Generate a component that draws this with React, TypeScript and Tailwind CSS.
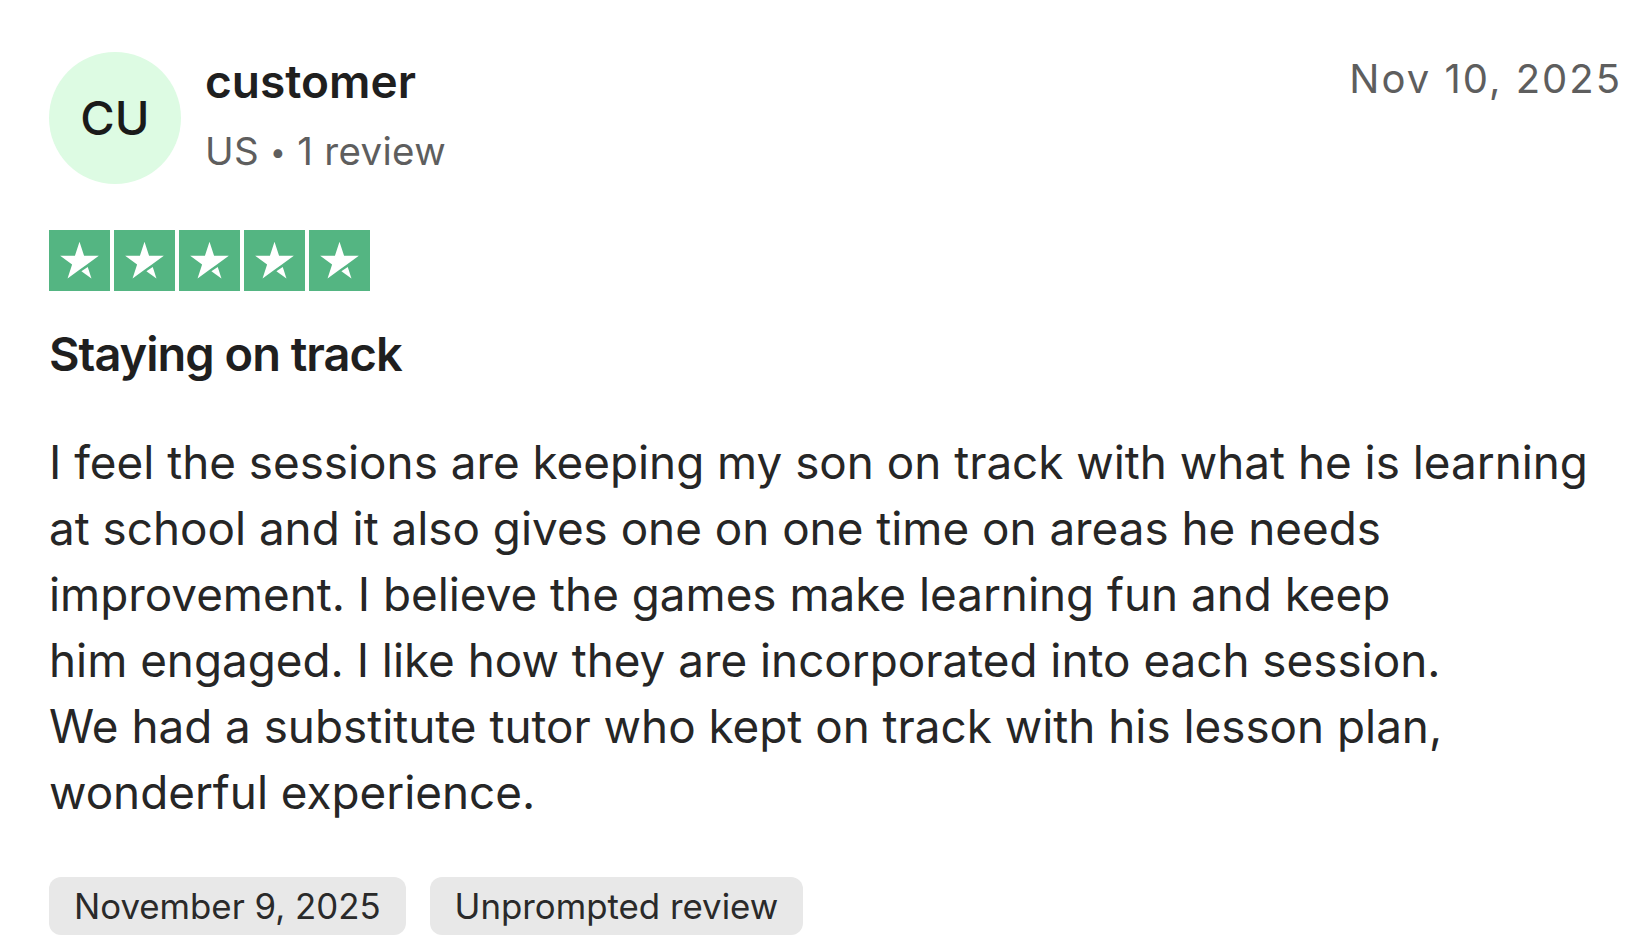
const stars = [0, 1, 2, 3, 4];

function StarBox() {
  return (
    <svg viewBox="0 0 24 24" className="h-[61px] w-[61px]" aria-hidden="true">
      <rect width="24" height="24" fill="#54b582" />
      <path
        d="M12 4.6 13.8 10.12 19.61 10.13 14.91 13.55 12 15.66 7.3 19.07 9.09 13.55 4.39 10.13 10.2 10.12Z"
        fill="#fff"
      />
      <path d="M15.25 14.55 16.7 19.07 12.75 16.2Z" fill="#fff" />
    </svg>
  );
}

function Chip({ label }: { label: string }) {
  return (
    <span className="inline-flex h-[58px] items-center rounded-[12px] bg-[#e8e8e8] px-[25px] text-[34.8px] leading-[1.5] text-[#2a2a2a]">
      {label}
    </span>
  );
}

const body =
  'I feel the sessions are keeping my son on track with what he is learning\n' +
  'at school and it also gives one on one time on areas he needs\n' +
  'improvement. I believe the games make learning fun and keep\n' +
  'him engaged. I like how they are incorporated into each session.\n' +
  'We had a substitute tutor who kept on track with his lesson plan,\n' +
  'wonderful experience.';

export default function App() {
  return (
    <div className="min-h-screen bg-white pl-[49px] pr-[24px] pt-[52px] font-['Inter',sans-serif] text-[#262626]">
      <header className="flex items-start justify-between">
        <div className="flex items-start gap-[24px]">
          <div className="flex h-[132px] w-[132px] items-center justify-center rounded-full bg-[#ddfbe3] text-[47px] font-medium text-[#1a1a1a]">
            CU
          </div>
          <div className="-mt-[4px]">
            <p className="text-[46px] font-semibold leading-[66px] text-[#1f1f1f]">customer</p>
            <p className="mt-[8px] text-[38.5px] leading-[58px] tracking-[0.3px] text-[#5e5e5e]">
              US <span className="text-[28px] align-[3px]">•</span> 1 review
            </p>
          </div>
        </div>
        <time className="-mt-[2px] text-[40px] leading-[58px] tracking-[2px] text-[#5e5e5e]">Nov 10, 2025</time>
      </header>

      <div className="mt-[46px] flex gap-[4px]">
        {stars.map((s) => (
          <StarBox key={s} />
        ))}
      </div>

      <h2 className="mt-[31px] text-[47px] font-semibold leading-[64px] tracking-[-1px] text-[#1f1f1f]">
        Staying on track
      </h2>

      <p className="mt-[44px] whitespace-pre-line text-[45.8px] leading-[66px]">{body}</p>

      <div className="mt-[51px] flex gap-[24px]">
        <Chip label="November 9, 2025" />
        <Chip label="Unprompted review" />
      </div>
    </div>
  );
}
